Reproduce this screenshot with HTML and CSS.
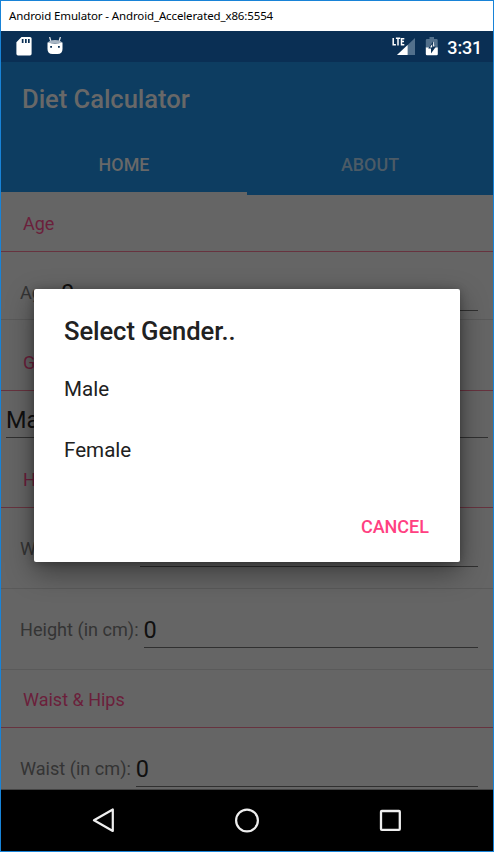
FILE: index.html
```html
<!DOCTYPE html>
<html lang="en">
<head>
<meta charset="utf-8">
<title>Android Emulator - Android_Accelerated_x86:5554</title>
<link rel="stylesheet" href="styles.css">
</head>
<body>
<div class="window">
  <header class="titlebar"><span>Android Emulator - Android_Accelerated_x86:5554</span></header>
  <div class="statusbar">
    <svg class="sd" width="16" height="19" viewBox="0 0 16 19"><path fill="#fff" fill-rule="evenodd" d="M5.5 0H14a1.6 1.6 0 0 1 1.6 1.6v15.2a1.6 1.6 0 0 1-1.6 1.6H2A1.6 1.6 0 0 1 .4 16.8V5.2zM5.8 2v4h1.7V2zM9 2v4h1.700V2zM12 2v4h1.700V2z"/></svg>
    <svg class="bot" width="16" height="18" viewBox="0 0 16 18"><path stroke="#dde3ea" stroke-width="1.300" d="M2.600 0l1.200 4M13.400 0l-1.200 4"/><path fill="#a9b6c4" d="M.7 6Q2 3 8 3t7.300 3z"/><path fill="#fff" d="M.5 5.600Q8 7.500 15.500 5.600V12q0 5-5 5h-5q-5 0-5-5z"/><path fill="#0a2f54" d="M3.200 9h1.800v1.800H3.200zM11 9h1.800v1.800H11z"/></svg>
    <span class="grow"></span>
    <svg class="signal" width="24" height="20" viewBox="0 0 24 20"><path fill="#52708c" d="M23 1v17H5z"/><path fill="#fff" d="M15.600 8v10H5z"/><path d="M0 0h13v9H0z" fill="#0a2f54"/><path fill="none" stroke="#fff" stroke-width="1.500" d="M1.200 1v6.700h2.700M3.900 1.300h4.300M6 1v7.400M12.300 1.700H9.500v6h2.800M9.500 4.600h2.500"/></svg>
    <svg class="battery" width="14" height="19" viewBox="0 0 14 19"><path fill="#52708c" d="M4.500 0h4.500v2h2.500q1.200 0 1.200 1.200V11H.8V3.200Q.8 2 2 2h2.500z"/><path fill="#fff" d="M.8 10.500h12V17q0 1.200-1.200 1.200H2Q.8 18.200.8 17z"/><path fill="#fff" d="M8.600 4.600L4 10.500h5.500z"/><path fill="#0a2f54" d="M8.100 4.200L3.200 11.500H6v5l5-7H8.100zM7.200 7v3.500H4.900z" fill-rule="evenodd"/></svg>
    <span class="clock">3:31</span>
  </div>
  <div class="appbar">
    <h1>Diet Calculator</h1>
    <nav class="tabs"><span class="tab active">HOME</span><span class="tab">ABOUT</span></nav>
  </div>
  <main class="form">
    <h2 class="head age-head">Age</h2>
    <div class="row age-row"><label>Age:</label><span class="input">0</span></div>
    <h2 class="head gender-head">Gender</h2>
    <div class="select-row"><span class="select">Male</span></div>
    <h2 class="head body-head">Height &amp; Weight</h2>
    <div class="row weight-row"><label>Weight (in kg):</label><span class="input">0</span></div>
    <div class="row height-row"><label>Height (in cm):</label><span class="input">0</span></div>
    <h2 class="head waist-head">Waist &amp; Hips</h2>
    <div class="row waist-row"><label>Waist (in cm):</label><span class="input">0</span></div>
  </main>
  <footer class="navbar">
    <svg width="24" height="26" viewBox="0 0 24 26"><path fill="none" stroke="#eee" stroke-width="2.200" stroke-linejoin="round" d="M20.800 1.500V23L2 12.300z"/></svg>
    <svg width="26" height="26" viewBox="0 0 26 26"><circle cx="13" cy="12.500" r="10.900" fill="none" stroke="#eee" stroke-width="2.200"/></svg>
    <svg width="24" height="26" viewBox="0 0 24 26"><rect x="3" y="3" width="18.800" height="18.800" rx=".8" fill="none" stroke="#eee" stroke-width="2.300"/></svg>
  </footer>
  <section class="dialog" role="dialog">
    <h3>Select Gender..</h3>
    <div class="option">Male</div>
    <div class="option">Female</div>
    <div class="actions"><button>CANCEL</button></div>
  </section>
</div>
</body>
</html>
```
FILE: styles.css
```css
* { box-sizing: border-box; }
body { margin: 0; font-family: Roboto, "Liberation Sans", sans-serif; }
h1, h2, h3 { margin: 0; }
.window {
  position: relative;
  width: 494px;
  height: 852px;
  border: 1px solid #1883d7;
  background: #656565;
  display: flex;
  flex-direction: column;
  overflow: hidden;
}
.titlebar {
  height: 30px;
  flex: none;
  padding-left: 8px;
  background: #fff;
  color: #000;
  font: 11.500px/29px "Noto Sans", sans-serif;
  letter-spacing: -0.130px;
  white-space: nowrap;
}
.statusbar {
  height: 31px;
  flex: none;
  display: flex;
  align-items: flex-start;
  padding: 6px 11px 0 15px;
  background: #0a2f54;
}
.bot { margin-left: 15px; }
.grow { flex: 1; }
.battery { margin-left: 9px; }
.clock {
  margin-left: 8px;
  color: #fff;
  font-size: 18px;
  font-weight: 500;
  line-height: 21px;
  letter-spacing: -0.200px;
}
.appbar {
  height: 133px;
  flex: none;
  display: flex;
  flex-direction: column;
  background: #0d3d61;
}
h1 {
  height: 73px;
  padding-left: 21px;
  color: #686868;
  font-size: 25.600px;
  font-weight: 500;
  line-height: 74px;
  letter-spacing: -0.060px;
}
.tabs { display: flex; flex: 1; }
.tab {
  flex: 1;
  color: #4c5b66;
  font-size: 17.900px;
  font-weight: 500;
  line-height: 60px;
  text-align: center;
}
.tab.active { color: #686868; box-shadow: inset 0 -3px #656565; }
.form { height: 595px; flex: none; overflow: hidden; border-bottom: 1px solid #444; }
.head {
  padding-left: 22px;
  color: #6b1f3b;
  border-bottom: 1px solid #67333f;
  font-size: 18px;
  font-weight: 400;
}
.age-head { height: 57px; line-height: 58px; }
.gender-head { height: 71px; line-height: 86px; }
.body-head { height: 57px; line-height: 58px; }
.waist-head { height: 58px; line-height: 59px; }
.row {
  display: flex;
  padding: 15px 15px 0 19px;
  border-bottom: 1px solid #5a5a5a;
}
.age-row { height: 68px; }
.weight-row, .height-row { height: 81px; }
.row label {
  color: #343434;
  font-size: 18.100px;
  line-height: 52px;
  white-space: nowrap;
}
.input {
  flex: 1;
  height: 44px;
  margin-left: 5px;
  border-bottom: 1px solid #303030;
  color: #101010;
  font-size: 23.500px;
  line-height: 53px;
}
.waist-row { border: 0; }
.select-row { height: 60px; padding: 0 5px; }
.select {
  display: block;
  height: 47px;
  border-bottom: 1px solid #303030;
  color: #101010;
  font-size: 23.500px;
  line-height: 59px;
}
.navbar {
  flex: 1;
  display: flex;
  justify-content: space-between;
  align-items: center;
  padding: 0 91px 0 91px;
  background: #000;
}
.dialog {
  position: absolute;
  left: 33px;
  top: 288px;
  width: 426px;
  height: 273px;
  padding: 18px 20px 0 30px;
  border-radius: 2px;
  background: #fff;
  box-shadow: 0 10px 28px rgba(0, 0, 0, .42), 0 1px 8px rgba(0, 0, 0, .25);
  color: #212121;
}
.dialog h3 { font-size: 25.600px; font-weight: 500; line-height: 49px; height: 51px; letter-spacing: -0.080px; }
.option { height: 61px; font-size: 20.600px; line-height: 63px; }
.actions { display: flex; justify-content: flex-end; padding-top: 27px; }
.actions button {
  border: 0;
  padding: 0 11px;
  background: none;
  color: #ff4081;
  font: 500 18px/40px Roboto, sans-serif;
}
```
